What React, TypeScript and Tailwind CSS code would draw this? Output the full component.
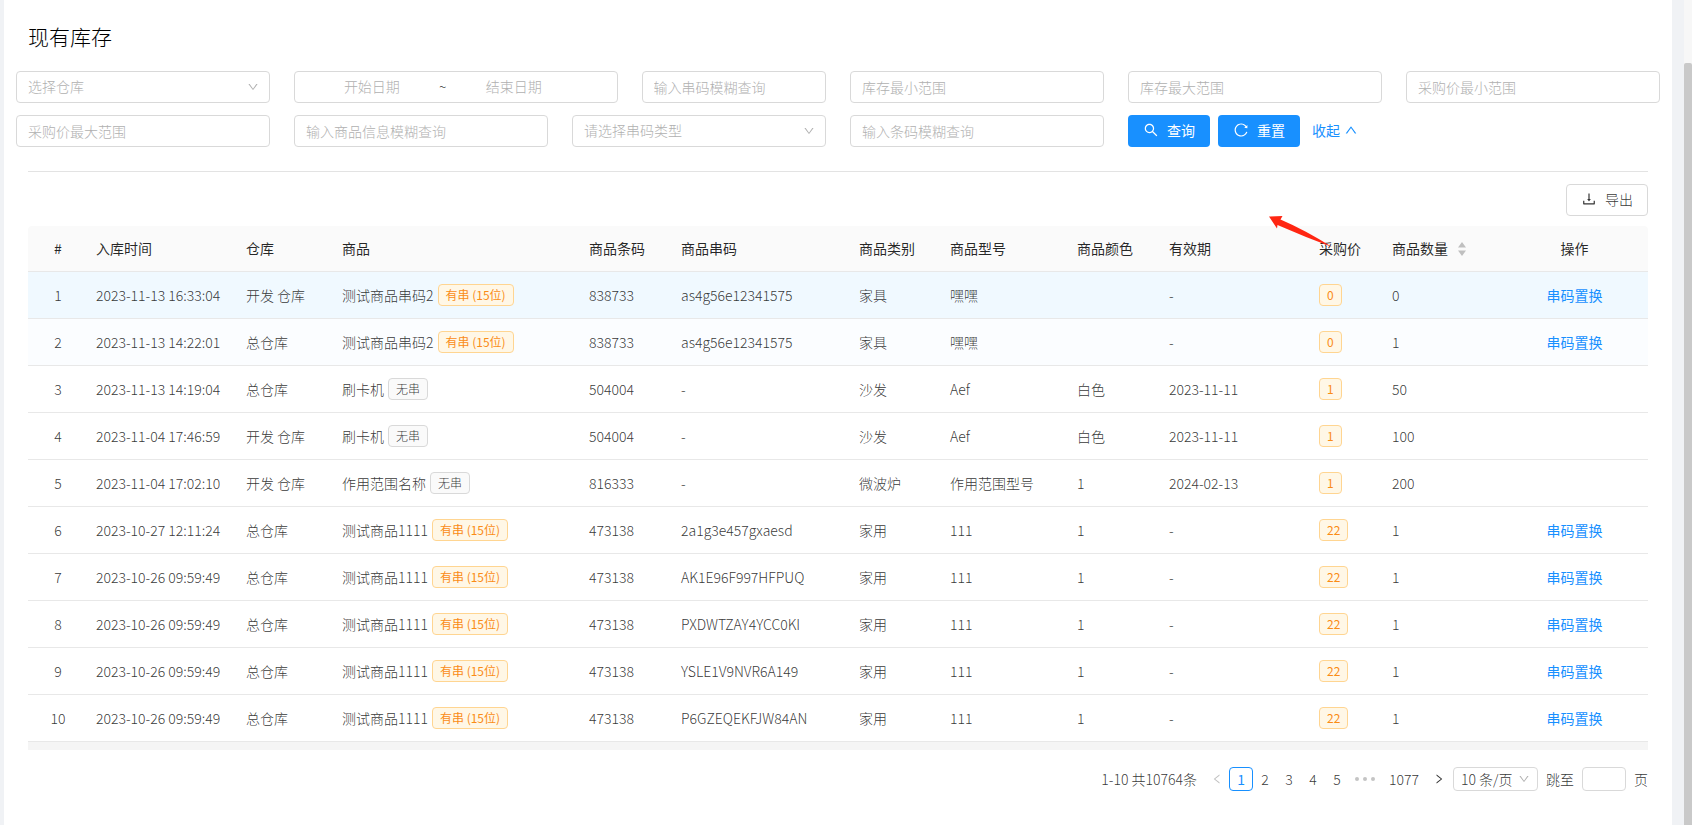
import { clsx } from 'clsx';
import type { InputHTMLAttributes } from 'react';
import {
  AiOutlineDown,
  AiOutlineDownload,
  AiOutlineLeft,
  AiOutlineReload,
  AiOutlineRight,
  AiOutlineSearch,
  AiOutlineUp,
} from 'react-icons/ai';

interface StockRow {
  time: string;
  store: string;
  name: string;
  serialTag: string;
  barcode: string;
  serial: string;
  category: string;
  model: string;
  color: string;
  expire: string;
  price: number;
  count: number;
}

const WITH_SERIAL = '有串 (15位)';
const NO_SERIAL = '无串';

function serialRow(time: string, serial: string): StockRow {
  return {
    time,
    store: '总仓库',
    name: '测试商品1111',
    serialTag: WITH_SERIAL,
    barcode: '473138',
    serial,
    category: '家用',
    model: '111',
    color: '1',
    expire: '-',
    price: 22,
    count: 1,
  };
}

const rows: StockRow[] = [
  { time: '2023-11-13 16:33:04', store: '开发 仓库', name: '测试商品串码2', serialTag: WITH_SERIAL, barcode: '838733', serial: 'as4g56e12341575', category: '家具', model: '嘿嘿', color: '', expire: '-', price: 0, count: 0 },
  { time: '2023-11-13 14:22:01', store: '总仓库', name: '测试商品串码2', serialTag: WITH_SERIAL, barcode: '838733', serial: 'as4g56e12341575', category: '家具', model: '嘿嘿', color: '', expire: '-', price: 0, count: 1 },
  { time: '2023-11-13 14:19:04', store: '总仓库', name: '刷卡机', serialTag: NO_SERIAL, barcode: '504004', serial: '-', category: '沙发', model: 'Aef', color: '白色', expire: '2023-11-11', price: 1, count: 50 },
  { time: '2023-11-04 17:46:59', store: '开发 仓库', name: '刷卡机', serialTag: NO_SERIAL, barcode: '504004', serial: '-', category: '沙发', model: 'Aef', color: '白色', expire: '2023-11-11', price: 1, count: 100 },
  { time: '2023-11-04 17:02:10', store: '开发 仓库', name: '作用范围名称', serialTag: NO_SERIAL, barcode: '816333', serial: '-', category: '微波炉', model: '作用范围型号', color: '1', expire: '2024-02-13', price: 1, count: 200 },
  serialRow('2023-10-27 12:11:24', '2a1g3e457gxaesd'),
  serialRow('2023-10-26 09:59:49', 'AK1E96F997HFPUQ'),
  serialRow('2023-10-26 09:59:49', 'PXDWTZAY4YCC0KI'),
  serialRow('2023-10-26 09:59:49', 'YSLE1V9NVR6A149'),
  serialRow('2023-10-26 09:59:49', 'P6GZEQEKFJW84AN'),
];

const field = 'h-8 w-full rounded border border-[#d9d9d9] bg-white px-[11px] outline-none placeholder:text-[#b0b0b0] focus:border-[#40a9ff]';
const dateInput = 'w-[44%] text-center outline-none placeholder:text-[#b0b0b0]';
const primaryButton = 'flex h-8 items-center gap-2 rounded bg-[#1890ff] px-[15px] pb-0.5 font-normal text-white';

function TextField({ label, className, ...props }: { label: string } & InputHTMLAttributes<HTMLInputElement>) {
  return (
    <div className={clsx('px-3', className ?? 'col-span-4')}>
      <input type="text" aria-label={label} placeholder={label} className={field} {...props} />
    </div>
  );
}

function SelectField({ label, options }: { label: string; options: string[] }) {
  return (
    <div className="col-span-4 px-3">
      <div className="relative">
        <select aria-label={label} defaultValue="" className={clsx(field, 'appearance-none pb-0.5 text-[#b0b0b0]')}>
          <option value="">{label}</option>
          {options.map((option) => (
            <option key={option}>{option}</option>
          ))}
        </select>
        <AiOutlineDown className="pointer-events-none absolute top-2.5 right-[11px] h-3 w-3 text-[#b0b0b0]" />
      </div>
    </div>
  );
}

function Tag({ plain, children }: { plain?: boolean; children: React.ReactNode }) {
  return (
    <span
      className={clsx(
        'inline-block rounded border px-[7px] text-xs leading-5',
        plain ? 'border-[#d9d9d9] bg-[#fafafa]' : 'border-[#ffd591] bg-[#fff7e6] font-normal text-[#fa8c16]',
      )}
    >
      {children}
    </span>
  );
}

function Filters() {
  return (
    <form className="grid grid-cols-24 gap-y-3" onSubmit={(e) => e.preventDefault()}>
      <SelectField label="选择仓库" options={['总仓库', '开发 仓库']} />
      <div className="col-span-5 px-3">
        <div className={clsx(field, 'flex items-center pb-0.5')}>
          <input type="text" aria-label="开始日期" placeholder="开始日期" className={dateInput} />
          <span className="w-2.5 text-center">~</span>
          <input type="text" aria-label="结束日期" placeholder="结束日期" className={dateInput} />
        </div>
      </div>
      <TextField label="输入串码模糊查询" className="col-span-3" />
      <TextField label="库存最小范围" />
      <TextField label="库存最大范围" />
      <TextField label="采购价最小范围" />
      <TextField label="采购价最大范围" />
      <TextField label="输入商品信息模糊查询" />
      <SelectField label="请选择串码类型" options={[WITH_SERIAL, NO_SERIAL]} />
      <TextField label="输入条码模糊查询" />
      <div className="col-span-8 flex items-center gap-2 px-3">
        <button type="submit" className={primaryButton}>
          <AiOutlineSearch className="h-4 w-4" />
          查询
        </button>
        <button type="reset" className={primaryButton}>
          <AiOutlineReload className="h-4 w-4" />
          重置
        </button>
        <a href="#" className="ml-1 flex items-center gap-1 pb-0.5 font-normal text-[#1890ff]">
          收起
          <AiOutlineUp className="h-3.5 w-3.5" />
        </a>
      </div>
    </form>
  );
}

function StockTable() {
  return (
    <table className="w-full table-fixed border-separate border-spacing-0 text-left leading-[21px]">
      <colgroup>
        <col className="w-[60px]" />
        <col className="w-[150px]" />
        <col className="w-[96px]" />
        <col className="w-[247px]" />
        <col className="w-[92px]" />
        <col className="w-[178px]" />
        <col className="w-[91px]" />
        <col className="w-[127px]" />
        <col className="w-[92px]" />
        <col className="w-[150px]" />
        <col className="w-[73px]" />
        <col className="w-[117px]" />
        <col className="w-[147px]" />
      </colgroup>
      <thead className="text-black/85 [&_th]:border-b [&_th]:border-[#e8e8e8] [&_th]:bg-[#fafafa] [&_th]:px-2 [&_th]:py-3 [&_th]:font-normal">
        <tr>
          <th className="rounded-tl text-center">#</th>
          <th>入库时间</th>
          <th>仓库</th>
          <th>商品</th>
          <th>商品条码</th>
          <th>商品串码</th>
          <th>商品类别</th>
          <th>商品型号</th>
          <th>商品颜色</th>
          <th>有效期</th>
          <th className="relative">
            采购价
            <svg viewBox="0 0 64 34" className="absolute -top-2.5 -left-[42px] h-[34px] w-16" fill="#ff2612" aria-hidden="true">
              <path d="M0 0.5 L13.5 0 L11.5 3.5 Q36 14 63 31 Q36 21 8.500 9 L8 12.500 Z" />
            </svg>
          </th>
          <th>
            <span className="flex items-center gap-2.5">
              商品数量
              <svg viewBox="0 0 8 14" className="h-3.5 w-2" fill="#bfbfbf">
                <path d="M4 0 L8 5.500 H0 Z M4 14 L8 8.500 H0 Z" />
              </svg>
            </span>
          </th>
          <th className="rounded-tr text-center">操作</th>
        </tr>
      </thead>
      <tbody className="[&_td]:border-b [&_td]:border-[#e8e8e8] [&_td]:px-2 [&_td]:py-3">
        {rows.map((row, i) => (
          <tr key={row.serial + i} className={clsx('h-[47px]', i === 0 && 'bg-[#f0f9ff]', i === 1 && 'bg-[#fbfdff]')}>
            <td className="text-center">{i + 1}</td>
            <td>{row.time}</td>
            <td>{row.store}</td>
            <td>
              <span className="flex items-center gap-1">
                {row.name}
                <Tag plain={row.serialTag === NO_SERIAL}>{row.serialTag}</Tag>
              </span>
            </td>
            <td>{row.barcode}</td>
            <td>{row.serial}</td>
            <td>{row.category}</td>
            <td>{row.model}</td>
            <td>{row.color}</td>
            <td>{row.expire}</td>
            <td>
              <span className="flex">
                <Tag>{row.price}</Tag>
              </span>
            </td>
            <td>{row.count}</td>
            <td className="text-center">
              {row.serialTag === WITH_SERIAL && (
                <a href="#" className="font-normal text-[#1890ff]">
                  串码置换
                </a>
              )}
            </td>
          </tr>
        ))}
      </tbody>
    </table>
  );
}

function Pagination() {
  return (
    <nav aria-label="分页" className="mt-[17px] flex h-6 items-center justify-end">
      <span className="mr-2">1-10 共10764条</span>
      <button type="button" aria-label="上一页" disabled className="flex h-6 w-6 items-center justify-center text-black/25">
        <AiOutlineLeft className="h-3 w-3" />
      </button>
      {[1, 2, 3, 4, 5].map((page) => (
        <button
          key={page}
          type="button"
          className={clsx('flex h-6 w-6 items-center justify-center', page === 1 && 'rounded border border-[#1890ff] font-normal text-[#1890ff]')}
        >
          {page}
        </button>
      ))}
      <span className="flex w-8 justify-center gap-1">
        <i className="h-1 w-1 rounded-full bg-[#c4c4c4]" />
        <i className="h-1 w-1 rounded-full bg-[#c4c4c4]" />
        <i className="h-1 w-1 rounded-full bg-[#c4c4c4]" />
      </span>
      <button type="button" className="h-6 px-2">
        1077
      </button>
      <button type="button" aria-label="下一页" className="mr-0.5 flex h-6 w-6 items-center justify-center">
        <AiOutlineRight className="h-3 w-3" />
      </button>
      <span className="relative">
        <select aria-label="每页条数" className="block h-6 w-[85px] appearance-none rounded border border-[#d9d9d9] bg-white pl-[7px] outline-none">
          <option>10 条/页</option>
          <option>20 条/页</option>
        </select>
        <AiOutlineDown className="pointer-events-none absolute top-1.5 right-2 h-3 w-3 text-[#b0b0b0]" />
      </span>
      <label className="ml-2 flex items-center gap-2">
        跳至
        <input type="text" className="h-6 w-11 rounded border border-[#d9d9d9] px-1 outline-none" />
        页
      </label>
    </nav>
  );
}

export default function App() {
  return (
    <div className="flex min-h-screen bg-[#f0f2f5] font-['Noto_Sans_CJK_SC',sans-serif] text-sm font-light text-black/80">
      <main className="ml-1 min-w-0 flex-1 bg-white">
        <h1 className="px-6 pt-[22px] pb-[21px] text-[21px] leading-7 text-black">现有库存</h1>
        <Filters />
        <section className="mx-6 mt-6 border-t border-[#e3e3e3] pt-3">
          <div className="mb-2.5 flex justify-end">
            <button type="button" className="flex h-8 items-center gap-2 rounded border border-[#d9d9d9] bg-white px-[14px] pb-0.5">
              <AiOutlineDownload className="h-4 w-4" />
              导出
            </button>
          </div>
          <StockTable />
          <div className="h-2 bg-[#f5f5f5]" />
          <Pagination />
        </section>
      </main>
      <div className="ml-3 w-2 bg-[#f7f7f7] pt-[63px]">
        <div className="h-full rounded-t-xs bg-[#c9c9c9]" />
      </div>
    </div>
  );
}
